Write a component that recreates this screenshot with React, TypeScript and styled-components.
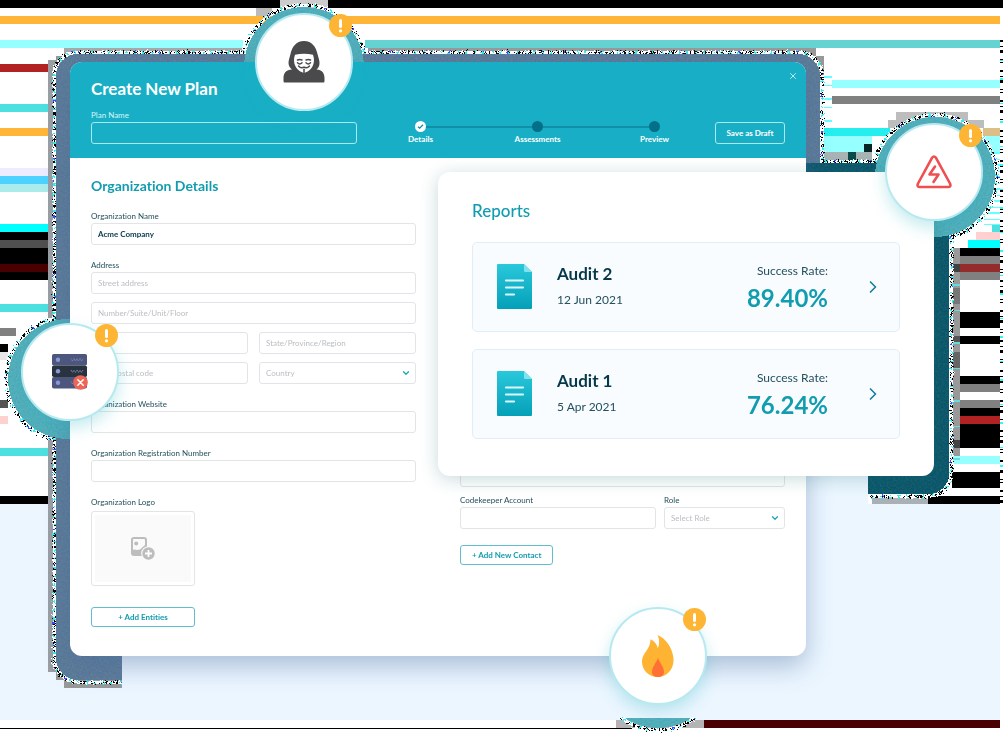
import React, { ReactNode, useId } from "react";
import styled, { createGlobalStyle, css } from "styled-components";
import { ChevronDown, ChevronRight, X } from "lucide-react";

const color = {
  teal: "#18afc6",
  tealText: "#129caf",
  ink: "#06384a",
  label: "#24505f",
  line: "#e2e5e8",
  hint: "#babec2",
  amber: "#ffb534",
};

const GlobalStyle = createGlobalStyle`
  *, *::before, *::after { box-sizing: border-box; }
  body {
    margin: 0;
    background: #fff;
    font-family: Lato, "Open Sans", sans-serif;
    font-variant-ligatures: none;
    color: ${color.ink};
  }
  h1, h2, h3, p, ol, ul { margin: 0; padding: 0; }
  ol, ul { list-style: none; }
  button, input, select { font-family: inherit; font-variant-ligatures: none; margin: 0; }
`;

/* ---------- page ---------- */

const Scene = styled.main`
  position: relative;
  min-height: 100vh;
  padding: 62px 197px 77px 70px;
  overflow: hidden;
`;

const BackdropSvg = styled.svg`
  position: absolute;
  inset: 0;
  width: 100%;
  height: 100%;
`;

const Window = styled.section`
  position: relative;
  border-radius: 12px;
  background: #fff;
  box-shadow: 0 10px 26px rgba(70, 105, 155, 0.4);
`;

const WindowHeader = styled.header`
  position: relative;
  display: grid;
  grid-template-columns: 266px 1fr 70px;
  column-gap: 2px;
  align-items: end;
  height: 96px;
  padding: 0 21px 14px;
  border-radius: 12px 12px 0 0;
  background: ${color.teal};
  color: #fff;
`;

const Title = styled.h1`
  margin-bottom: 11px;
  font-size: 17px;
  line-height: 20px;
  font-weight: 700;
`;

const CloseButton = styled.button`
  position: absolute;
  top: 9px;
  right: 8px;
  display: flex;
  padding: 0;
  border: 0;
  background: none;
  color: #d8f6fa;
`;

const controlBox = css`
  width: 100%;
  min-width: 0;
  height: 22px;
  padding: 0 6px;
  border: 1px solid ${color.line};
  border-radius: 3px;
  outline: 0;
  background: #fff;
  font-size: 8px;
  line-height: 10px;
`;

const TextInput = styled.input<{ $onTeal?: boolean }>`
  ${controlBox}
  color: ${color.ink};
  font-weight: 700;
  &::placeholder { color: ${color.hint}; font-weight: 400; opacity: 1; }
  ${(p) => p.$onTeal && css`border-color: #a8eaf2; background: transparent; color: #fff;`}
`;

const SelectInput = styled.select`
  ${controlBox}
  appearance: none;
  color: ${color.hint};
`;

const SelectWrap = styled.span`
  position: relative;
  display: flex;
  height: 22px;
  svg { position: absolute; right: 5px; top: 6px; color: #18a6bd; pointer-events: none; }
`;

const Field = styled.div`
  display: flex;
  flex-direction: column;
  gap: 2px;
  min-width: 0;
`;

const FieldLabel = styled.label<{ $onTeal?: boolean }>`
  font-size: 8px;
  line-height: 10px;
  color: ${(p) => (p.$onTeal ? "#d5f6fa" : color.label)};
`;

const Steps = styled.ol`
  display: flex;
  padding-left: 3px;
`;

const Step = styled.li<{ $last?: boolean }>`
  position: relative;
  flex: 1;
  display: flex;
  flex-direction: column;
  align-items: center;
  gap: 2px;
  font-size: 8px;
  line-height: 10px;
  font-weight: 700;
  ${(p) => !p.$last && css`
    &::after {
      content: "";
      position: absolute;
      top: 5px;
      left: 50%;
      width: 100%;
      height: 2px;
      background: #108fa8;
    }
  `}
`;

const StepDot = styled.span<{ $done?: boolean }>`
  position: relative;
  z-index: 1;
  display: grid;
  place-items: center;
  width: 11px;
  height: 11px;
  border-radius: 50%;
  background: ${(p) => (p.$done ? "#fff" : "#046f89")};
`;

const Button = styled.button<{ $tone: "light" | "teal"; $wide?: boolean }>`
  align-self: ${(p) => (p.$tone === "light" ? "end" : "flex-start")};
  width: ${(p) => (p.$wide ? "104px" : "auto")};
  height: ${(p) => (p.$tone === "light" ? "22px" : "20px")};
  padding: 0 ${(p) => (p.$tone === "light" ? "8px" : "11px")};
  border: 1px solid ${(p) => (p.$tone === "light" ? "#a8eaf2" : "#5fbfce")};
  border-radius: 3px;
  background: transparent;
  color: ${(p) => (p.$tone === "light" ? "#fff" : color.tealText)};
  font-size: 8px;
  line-height: 10px;
  font-weight: 700;
  white-space: nowrap;
`;

const WindowBody = styled.form`
  display: grid;
  grid-template-columns: 1fr 1fr;
  column-gap: 44px;
  padding: 18px 21px 29px;
`;

const Column = styled.div<{ $end?: boolean }>`
  display: flex;
  flex-direction: column;
  gap: 15px;
  min-width: 0;
  ${(p) => p.$end && css`justify-content: flex-end; gap: 8px; padding-bottom: 62px;`}
`;

const SectionTitle = styled.h2`
  font-size: 14px;
  line-height: 20px;
  font-weight: 700;
  color: ${color.tealText};
`;

const AddressFields = styled.div`
  display: flex;
  flex-direction: column;
  gap: 8px;
`;

const Pair = styled.div<{ $account?: boolean }>`
  display: grid;
  grid-template-columns: ${(p) => (p.$account ? "1fr 121px" : "1fr 1fr")};
  gap: ${(p) => (p.$account ? "8px" : "11px")};
  margin-bottom: ${(p) => (p.$account ? "8px" : "0")};
`;

const LogoGroup = styled.div`
  display: flex;
  flex-direction: column;
  align-items: flex-start;
  gap: 4px;
  margin-bottom: 6px;
`;

const LogoCaption = styled.span`
  font-size: 8px;
  line-height: 10px;
  color: ${color.label};
`;

const LogoDrop = styled.button`
  display: grid;
  place-items: center;
  width: 104px;
  height: 75px;
  padding: 0;
  border: 1px solid ${color.line};
  border-radius: 3px;
  background: #fafafa;
  box-shadow: inset 0 0 0 3px #fff;
`;

/* ---------- reports ---------- */

const ReportsPanel = styled.section`
  position: absolute;
  top: 172px;
  left: 438px;
  right: 69px;
  padding: 27px 34px 37px;
  border-radius: 12px;
  background: #fff;
  box-shadow: 0 3px 18px rgba(20, 95, 105, 0.24);
`;

const ReportsTitle = styled.h2`
  margin-bottom: 19px;
  font-size: 17px;
  line-height: 24px;
  font-weight: 500;
  color: ${color.tealText};
`;

const ReportList = styled.ul`
  display: flex;
  flex-direction: column;
  gap: 17px;
`;

const ReportCard = styled.li`
  display: flex;
  align-items: center;
  height: 90px;
  padding: 0 20px 2px 24px;
  border: 1px solid #e2edfa;
  border-radius: 5px;
  background: #f8fcff;
`;

const ReportText = styled.div<{ $right?: boolean }>`
  display: flex;
  flex-direction: column;
  gap: ${(p) => (p.$right ? "4px" : "8px")};
  ${(p) => (p.$right
    ? css`margin-left: auto; margin-right: 35px; padding-top: 4px; text-align: right;`
    : css`margin-left: 25px;`)}
`;

const ReportName = styled.h3`
  font-size: 17px;
  line-height: 20px;
  font-weight: 700;
`;

const Small = styled.p`
  font-size: 12px;
  line-height: 16px;
  color: #24505f;
`;

const Rate = styled.p`
  font-size: 24px;
  line-height: 30px;
  font-weight: 700;
  color: ${color.tealText};
`;

const OpenButton = styled.button`
  display: flex;
  padding: 2px 0 0;
  border: 0;
  background: none;
  color: #167f9c;
  margin-right: -4px;
`;

/* ---------- floating alerts ---------- */

type Spot = "mask" | "power" | "server" | "fire";

const spots: Record<Spot, ReturnType<typeof css>> = {
  mask: css`left: 255px; top: 13px;`,
  power: css`right: 20px; top: 123px;`,
  server: css`left: 21px; top: 323px;`,
  fire: css`left: 609px; top: 607px;`,
};

const Bubble = styled.div<{ $spot: Spot }>`
  position: absolute;
  ${(p) => spots[p.$spot]}
  display: grid;
  place-items: center;
  width: 98px;
  height: 98px;
  border: 2px solid #b8e9f0;
  border-radius: 50%;
  background: #fff;
  box-shadow: 0 7px 16px rgba(30, 176, 190, 0.26);
`;

const Notice = styled.svg`
  position: absolute;
  top: -1px;
  right: -1px;
  width: 23px;
  height: 23px;
`;

/* ---------- drawings ---------- */

type Band = [number, number, number, number, string];

const bands: Band[] = [
  [0, 0, 1003, 8, "#000"],
  [0, 16, 1000, 8, "#ffb638"],
  [0, 40, 243, 8, "#96ffff"],
  [365, 40, 635, 8, "#66d3d3"],
  [0, 64, 48, 8, "#b22222"],
  [0, 104, 48, 8, "#4de0e0"],
  [0, 128, 48, 8, "#ffb638"],
  [0, 168, 48, 8, "#ecebff"],
  [0, 176, 48, 8, "#4dd2ff"],
  [0, 184, 48, 8, "#aaecec"],
  [0, 224, 48, 8, "#00ffff"],
  [0, 232, 48, 48, "#000"],
  [0, 240, 48, 8, "#505050"],
  [0, 264, 48, 8, "#480000"],
  [0, 304, 48, 8, "#4de0e0"],
  [0, 328, 16, 8, "#808080"],
  [0, 344, 8, 8, "#000"],
  [0, 352, 8, 8, "#e8e8e8"],
  [0, 400, 8, 8, "#555"],
  [0, 416, 8, 8, "#ffd0d0"],
  [0, 448, 48, 8, "#4de0e0"],
  [0, 496, 48, 8, "#000"],
  [0, 504, 1000, 216, "#ebf6ff"],
  [806, 470, 62, 34, "#ebf6ff"],
  [832, 80, 168, 8, "#96ffff"],
  [832, 96, 168, 8, "#808080"],
  [824, 128, 66, 8, "#26eeee"],
  [824, 136, 48, 16, "#96ffff"],
  [824, 152, 48, 8, "#a8b4b4"],
  [848, 152, 8, 8, "#0b4a4a"],
  [864, 144, 8, 8, "#062626"],
  [983, 128, 17, 8, "#dcbf86"],
  [983, 136, 17, 16, "#96ffff"],
  [992, 224, 8, 8, "#4de0e0"],
  [976, 232, 24, 8, "#ffd0d0"],
  [968, 240, 32, 8, "#00ffff"],
  [960, 248, 40, 8, "#000"],
  [960, 256, 40, 24, "#808080"],
  [960, 264, 40, 8, "#952c2c"],
  [960, 312, 40, 16, "#000"],
  [960, 336, 40, 8, "#000"],
  [960, 376, 40, 8, "#000"],
  [960, 384, 40, 8, "#808080"],
  [960, 400, 40, 8, "#808080"],
  [960, 408, 40, 40, "#000"],
  [960, 416, 40, 8, "#b22222"],
  [952, 456, 48, 8, "#96ffff"],
  [952, 472, 48, 16, "#000"],
  [928, 496, 72, 8, "#000"],
  [872, 496, 56, 8, "#a9b0b6"],
  [704, 720, 296, 8, "#480000"],
  [0, 728, 632, 1, "#000"],
  [48, 60, 8, 612, "#999fa3"],
  [64, 48, 184, 8, "#a9a9a9"],
  [368, 48, 448, 8, "#999"],
  [56, 56, 16, 8, "#999"],
  [816, 56, 8, 24, "#999"],
  [952, 248, 8, 208, "#999"],
  [952, 264, 8, 8, "#404040"],
  [952, 288, 8, 16, "#777"],
  [952, 336, 8, 8, "#555"],
  [952, 352, 8, 16, "#666"],
  [952, 440, 8, 8, "#444"],
  [280, 0, 48, 8, "#ccc"],
  [256, 8, 16, 8, "#bbb"],
  [896, 112, 72, 8, "#bdbdbd"],
  [888, 120, 24, 8, "#bdbdbd"],
  [960, 120, 24, 8, "#bdbdbd"],
  [56, 672, 8, 8, "#999"],
  [64, 680, 58, 8, "#999"],
  [616, 720, 88, 8, "#b4b4b4"],
];

const circles: [number, number][] = [[304, 67], [935, 177], [68, 379], [658, 668]];

function Outlines(props: React.SVGProps<SVGGElement>) {
  return (
    <g fill="none" {...props}>
      <rect x="54" y="52" width="768" height="630" rx="24" clipPath="url(#mainArea)" />
      <rect x="790" y="161" width="161" height="335" rx="22" clipPath="url(#reportArea)" />
      {circles.map(([x, y]) => (
        <circle key={x} cx={x} cy={y} r="62" clipPath={x === 658 ? "url(#fireArea)" : undefined} />
      ))}
    </g>
  );
}

function PanelHalos() {
  return (
    <>
      <rect x="56" y="54" width="764" height="626" rx="22" fill="#587b9c" clipPath="url(#mainArea)" />
      <rect x="790" y="163" width="159" height="331" rx="20" fill="#00546a" clipPath="url(#reportArea)" />
    </>
  );
}

function BubbleHalos() {
  return (
    <>
      {circles.map(([x, y]) => (
        <circle key={x} cx={x} cy={y} r="60" fill="#4db4c2" clipPath={x === 658 ? "url(#fireArea)" : undefined} />
      ))}
    </>
  );
}

function Backdrop() {
  return (
    <BackdropSvg viewBox="0 0 1003 733" preserveAspectRatio="none" aria-hidden="true" shapeRendering="crispEdges">
      <defs>
        <clipPath id="mainArea">
          <path d="M40 40H840V172H122V700H40Z" />
        </clipPath>
        <clipPath id="reportArea">
          <path d="M806 150H970V510H868V470H880V190H806Z" />
        </clipPath>
        <clipPath id="fireArea">
          <rect x="590" y="718" width="140" height="15" />
        </clipPath>
        <filter id="rough" x="0" y="0" width="1003" height="733" filterUnits="userSpaceOnUse">
          <feTurbulence type="fractalNoise" baseFrequency="0.8" numOctaves="1" seed="4" result="n" />
          <feDisplacementMap in="SourceGraphic" in2="n" scale="7" xChannelSelector="R" yChannelSelector="G" />
        </filter>
        <filter id="grain" x="0" y="0" width="1003" height="733" filterUnits="userSpaceOnUse" colorInterpolationFilters="sRGB">
          <feTurbulence type="fractalNoise" baseFrequency="0.55" numOctaves="2" seed="9" result="n" />
          <feComposite in="n" in2="SourceGraphic" operator="in" result="inside" />
          <feComponentTransfer in="inside" result="soft">
            <feFuncA type="linear" slope="0.24" />
          </feComponentTransfer>
          <feMerge>
            <feMergeNode in="SourceGraphic" />
            <feMergeNode in="soft" />
          </feMerge>
        </filter>
      </defs>
      {bands.map(([x, y, w, h, fill], i) => (
        <rect key={i} x={x} y={y} width={w} height={h} fill={fill} />
      ))}
      <path d="M1001.500 40V504" stroke="#000" strokeWidth="3" strokeDasharray="2 4 1 3 3 6 1 2 1 7" />
      <path d="M1001.500 60V480" stroke="#2ff" strokeWidth="3" strokeDasharray="1 17 2 23" />
      <path d="M828 76V128" stroke="#6ff" strokeWidth="8" strokeDasharray="2 7 1 12" />
      <path d="M992 152V225" stroke="#6ff" strokeWidth="16" strokeDasharray="2 5 1 4" />
      <path d="M956 284V470" stroke="#6dd" strokeWidth="8" strokeDasharray="2 24 1 31" />
      <Outlines stroke="#fff" strokeWidth="3" />
      <g filter="url(#rough)">
        <Outlines stroke="#fff" strokeWidth="3" />
        <Outlines stroke="#000" strokeWidth="3" strokeDasharray="2 2 1 2 1 3" />
        <Outlines stroke="#3ee" strokeWidth="3" strokeDasharray="2 8 1 6" strokeDashoffset="4" />
        <Outlines stroke="#44f" strokeWidth="2" strokeDasharray="1 21 2 34" />
      </g>
      <g filter="url(#grain)">
        <PanelHalos />
        <BubbleHalos />
      </g>
    </BackdropSvg>
  );
}

function NoticeMark() {
  return (
    <Notice viewBox="0 0 23 23" aria-label="Alert" role="img">
      <circle cx="11.500" cy="11.500" r="11.500" fill={color.amber} />
      <rect x="10" y="5" width="3" height="9" rx="1.500" fill="#fff" />
      <circle cx="11.500" cy="16.800" r="1.600" fill="#fff" />
    </Notice>
  );
}

function MaskIcon() {
  return (
    <svg width="42" height="42" viewBox="0 0 42 42">
      <path fill="#4a4a4c" d="M21 0C13 0 9 6 7.500 13 6.500 17 5.500 19 5.500 22c0 3 1.500 5 3.500 6.500C3 29 .5 32 .5 37v3c0 1 .5 1.500 1.500 1.500h38c1 0 1.500-.5 1.500-1.500v-3c0-5-2.500-8-8-8.500C35.500 27 36.500 25 36.500 22c0-3-1-5-2-9C33 6 29 0 21 0Z" />
      <path fill="#fff" d="M12 13.800q9-2.300 18 0c1.500 4 1.200 8-.3 11.200C27.500 29 24.300 31.500 21 31.500S14.500 29 12.300 25c-1.500-3.200-1.800-7.200-.3-11.200Z" />
      <g fill="none" stroke="#4a4a4c" strokeWidth="1.500" strokeLinecap="round">
        <path d="M14.500 19q2-1.200 4.500 0M23 19q2.500-1.200 4.500 0M14.500 21.800q2.200 2.300 4.500 0M23 21.800q2.300 2.300 4.500 0M15.500 25q2.500 2.800 5.500 1.200Q24 27.800 26.500 25" />
        <path d="M21 28.300v3" />
      </g>
    </svg>
  );
}

function PowerIcon() {
  return (
    <svg width="36" height="34" viewBox="0 0 36 34" fill="none" stroke="#ef4f50" strokeWidth="2.600" strokeLinejoin="round" strokeLinecap="round">
      <path d="M16 2.800Q18 .2 20 2.800L34 28.500Q35.500 32 32 32H4Q.5 32 2 28.500Z" />
      <path d="m19 11.500-5.500 8h9L17.500 27" />
    </svg>
  );
}

function ServerIcon() {
  return (
    <svg width="36" height="36" viewBox="0 0 36 36">
      {[0, 11.500, 23].map((y, i) => (
        <g key={y} transform={`translate(0 ${y})`}>
          <rect width="35" height="11.500" rx="1.800" fill={i === 1 ? "#29333f" : "#4d567c"} />
          <circle cx="6" cy="5.800" r="2.200" fill="#8a97da" />
          <path d="m19 4.500 1.500 2.500L22 4.500 23.500 7 25 4.500 26.500 7 28 4.500 29.500 7 31 4.500" fill="none" stroke="#8491c6" strokeWidth="1" strokeDasharray="1 .7" />
        </g>
      ))}
      <circle cx="28.500" cy="28.500" r="7.300" fill="#ee6656" />
      <path d="m25.800 25.800 5.400 5.400m0-5.400-5.400 5.400" stroke="#fff" strokeWidth="1.500" strokeLinecap="round" />
    </svg>
  );
}

function FireIcon() {
  return (
    <svg width="32" height="42" viewBox="0 0 32 42">
      <path fill="#ffb332" d="M15.500 0C23 3 30.500 12 31.500 23.500 32.300 34 25 42 16 42S-.2 35.500 0 26C.2 18 8.500 14.500 8.500 4.200 13 6.500 15 9.500 15.700 13 17.800 9 17.500 4 15.500 0Z" />
      <path fill="#ff7034" d="M16 22.500C17 27 22 31.500 22 37c0 3.300-2.500 5-6 5s-6-1.700-6-5c0-5.500 5-10 6-14.500Z" />
    </svg>
  );
}

function DocumentIcon() {
  const id = useId();
  return (
    <svg width="35" height="45" viewBox="0 0 35 45" aria-hidden="true">
      <linearGradient id={id} x1="0" y1="0" x2="0" y2="1">
        <stop stopColor="#2ac8db" />
        <stop offset="1" stopColor="#04a0b8" />
      </linearGradient>
      <path fill={`url(#${id})`} d="M1 0h26l8 8v36q0 1-1 1H1q-1 0-1-1V1q0-1 1-1Z" />
      <path fill="#7ee3ee" d="m27 0 8 8h-7q-1 0-1-1Z" />
      <path d="M9 16.500h17M9 23.500h17M9 30.500h8" stroke="#dcfbff" strokeWidth="2.200" strokeLinecap="round" />
    </svg>
  );
}

function AddImageIcon() {
  return (
    <svg width="24" height="24" viewBox="0 0 24 24">
      <rect x="1" y="1" width="14" height="17" rx="2" fill="#fafafa" stroke="#bdbdbd" strokeWidth="2" />
      <circle cx="5.200" cy="6.500" r="2" fill="#bdbdbd" />
      <path fill="#bdbdbd" d="M1 13q2.500-1 5 0l3-.5L14 8h1v10H1Z" />
      <circle cx="17.500" cy="16.500" r="7.300" fill="#fafafa" />
      <circle cx="17.500" cy="16.500" r="6.200" fill="#bdbdbd" />
      <path d="M17.500 13v7M14 16.500h7" stroke="#fff" strokeWidth="1.800" />
    </svg>
  );
}

/* ---------- composed parts ---------- */

function LabeledInput({ label, onTeal, value }: { label: string; onTeal?: boolean; value?: string }) {
  const id = useId();
  return (
    <Field>
      <FieldLabel htmlFor={id} $onTeal={onTeal}>{label}</FieldLabel>
      <TextInput id={id} $onTeal={onTeal} defaultValue={value} />
    </Field>
  );
}

function Dropdown({ id, name, placeholder }: { id?: string; name: string; placeholder: string }) {
  return (
    <SelectWrap>
      <SelectInput id={id} aria-label={name} defaultValue="">
        <option value="">{placeholder}</option>
      </SelectInput>
      <ChevronDown size={10} strokeWidth={3} />
    </SelectWrap>
  );
}

function Alert({ spot, children }: { spot: Spot; children: ReactNode }) {
  return (
    <Bubble $spot={spot}>
      {children}
      <NoticeMark />
    </Bubble>
  );
}

const reports = [
  { name: "Audit 2", date: "12 Jun 2021", rate: "89.40%" },
  { name: "Audit 1", date: "5 Apr 2021", rate: "76.24%" },
];

export default function App() {
  return (
    <Scene>
      <GlobalStyle />
      <Backdrop />
      <Window>
        <WindowHeader>
          <div>
            <Title>Create New Plan</Title>
            <LabeledInput label="Plan Name" onTeal />
          </div>
          <Steps>
            <Step>
              <StepDot $done>
                <svg width="7" height="7" viewBox="0 0 7 7" fill="none" stroke="#108fa8" strokeWidth="1.300">
                  <path d="m1 3.700 1.700 1.500L6 1.800" />
                </svg>
              </StepDot>
              Details
            </Step>
            <Step><StepDot />Assessments</Step>
            <Step $last><StepDot />Preview</Step>
          </Steps>
          <Button type="button" $tone="light">Save as Draft</Button>
          <CloseButton type="button" aria-label="Close"><X size={10} strokeWidth={2} /></CloseButton>
        </WindowHeader>
        <WindowBody>
          <Column>
            <SectionTitle>Organization Details</SectionTitle>
            <LabeledInput label="Organization Name" value="Acme Company" />
            <Field>
              <FieldLabel htmlFor="street">Address</FieldLabel>
              <AddressFields>
                <TextInput id="street" placeholder="Street address" />
                <TextInput aria-label="Number" placeholder="Number/Suite/Unit/Floor" />
                <Pair>
                  <TextInput aria-label="City" placeholder="City" />
                  <TextInput aria-label="State" placeholder="State/Province/Region" />
                </Pair>
                <Pair>
                  <TextInput aria-label="Postal code" placeholder="Zip/Postal code" />
                  <Dropdown name="Country" placeholder="Country" />
                </Pair>
              </AddressFields>
            </Field>
            <LabeledInput label="Organization Website" />
            <LabeledInput label="Organization Registration Number" />
            <LogoGroup>
              <LogoCaption>Organization Logo</LogoCaption>
              <LogoDrop type="button" aria-label="Upload logo"><AddImageIcon /></LogoDrop>
            </LogoGroup>
            <Button type="button" $tone="teal" $wide>+ Add Entities</Button>
          </Column>
          <Column $end>
            <TextInput aria-label="Contact email" />
            <Pair $account>
              <LabeledInput label="Codekeeper Account" />
              <Field>
                <FieldLabel htmlFor="role">Role</FieldLabel>
                <Dropdown id="role" name="Role" placeholder="Select Role" />
              </Field>
            </Pair>
            <Button type="button" $tone="teal">+ Add New Contact</Button>
          </Column>
        </WindowBody>
      </Window>

      <ReportsPanel>
        <ReportsTitle>Reports</ReportsTitle>
        <ReportList>
          {reports.map((r) => (
            <ReportCard key={r.name}>
              <DocumentIcon />
              <ReportText>
                <ReportName>{r.name}</ReportName>
                <Small>{r.date}</Small>
              </ReportText>
              <ReportText $right>
                <Small>Success Rate:</Small>
                <Rate>{r.rate}</Rate>
              </ReportText>
              <OpenButton type="button" aria-label={`Open ${r.name}`}><ChevronRight size={20} strokeWidth={2} /></OpenButton>
            </ReportCard>
          ))}
        </ReportList>
      </ReportsPanel>

      <Alert spot="mask"><MaskIcon /></Alert>
      <Alert spot="power"><PowerIcon /></Alert>
      <Alert spot="server"><ServerIcon /></Alert>
      <Alert spot="fire"><FireIcon /></Alert>
    </Scene>
  );
}
